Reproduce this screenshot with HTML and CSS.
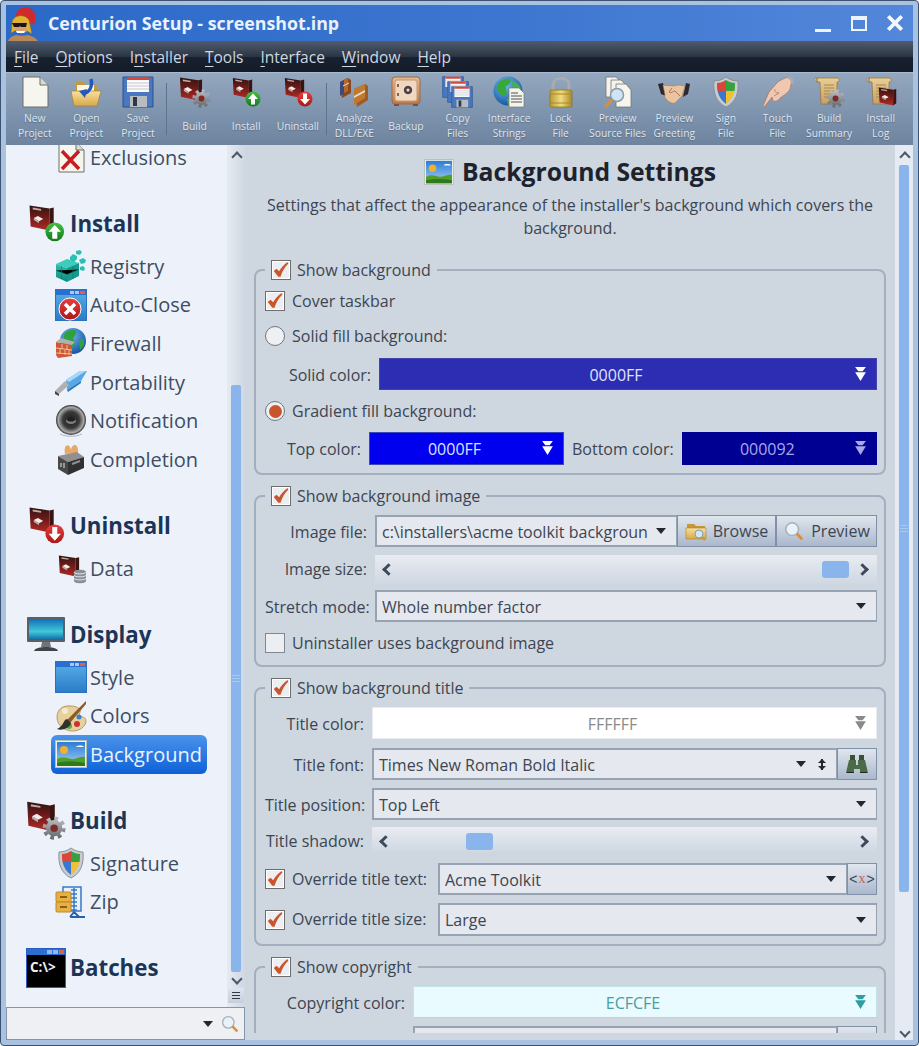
FILE: index.html
```html
<!DOCTYPE html>
<html lang="en">
<head>
<meta charset="utf-8">
<title>Centurion Setup - screenshot.inp</title>
<link rel="stylesheet" href="styles.css">
</head>
<body>
<svg class="sprite" aria-hidden="true">
<defs>
<linearGradient id="gBox" x1="0" y1="0" x2="0" y2="1"><stop offset="0" stop-color="#2a1614"/><stop offset=".45" stop-color="#6e1a18"/><stop offset="1" stop-color="#b02a26"/></linearGradient>
<linearGradient id="gGear" x1="0" y1="0" x2="0" y2="1"><stop offset="0" stop-color="#b5b8bc"/><stop offset="1" stop-color="#6c7074"/></linearGradient>
<linearGradient id="gGreen" x1="0" y1="0" x2="0" y2="1"><stop offset="0" stop-color="#48c040"/><stop offset="1" stop-color="#107a20"/></linearGradient>
<linearGradient id="gRed" x1="0" y1="0" x2="0" y2="1"><stop offset="0" stop-color="#e84040"/><stop offset="1" stop-color="#a81818"/></linearGradient>
<linearGradient id="gFolder" x1="0" y1="0" x2="0" y2="1"><stop offset="0" stop-color="#f8e0a0"/><stop offset="1" stop-color="#d8a848"/></linearGradient>
<linearGradient id="gGold" x1="0" y1="0" x2="1" y2="0"><stop offset="0" stop-color="#b89a38"/><stop offset=".5" stop-color="#f0dc80"/><stop offset="1" stop-color="#a88a28"/></linearGradient>
<linearGradient id="gWin" x1="0" y1="0" x2="0" y2="1"><stop offset="0" stop-color="#5ab0e8"/><stop offset="1" stop-color="#2a7cc8"/></linearGradient>
<linearGradient id="gScreen" x1="0" y1="0" x2="0" y2="1"><stop offset="0" stop-color="#1070b8"/><stop offset=".6" stop-color="#40c8d8"/><stop offset="1" stop-color="#0c68a8"/></linearGradient>
<linearGradient id="gSky" x1="0" y1="0" x2="0" y2="1"><stop offset="0" stop-color="#2a7cd8"/><stop offset="1" stop-color="#a8d0f0"/></linearGradient>
<linearGradient id="gCopper" x1="0" y1="0" x2="0" y2="1"><stop offset="0" stop-color="#e8b890"/><stop offset="1" stop-color="#b87a50"/></linearGradient>
<linearGradient id="gScroll" x1="0" y1="0" x2="0" y2="1"><stop offset="0" stop-color="#e8cf98"/><stop offset="1" stop-color="#c8a060"/></linearGradient>
<linearGradient id="gTeal" x1="0" y1="0" x2="0" y2="1"><stop offset="0" stop-color="#30c0b0"/><stop offset="1" stop-color="#10887c"/></linearGradient>
<radialGradient id="gGlobe" cx=".4" cy=".3" r=".8"><stop offset="0" stop-color="#70b8f0"/><stop offset="1" stop-color="#0c4a98"/></radialGradient>
<radialGradient id="gSpk" cx=".5" cy=".5" r=".5"><stop offset="0" stop-color="#1c1c1c"/><stop offset=".55" stop-color="#3a3a3a"/><stop offset=".85" stop-color="#a8a8a8"/><stop offset="1" stop-color="#303030"/></radialGradient>

<symbol id="box" viewBox="0 0 25 26"><path d="M1 1 20 4V25L2 21Z" fill="url(#gBox)"/><path d="M20 4l4-1V22l-4 3Z" fill="#3a1412"/><path d="M4 3l8 1.500V6L4 4.800Z" fill="#c8a8a0"/><path d="M5 13l4-2 5 3-4 2Z" fill="#f0ece8"/><path d="M5 13l5 3v2l-5-3Z" fill="#b8b0ac"/></symbol>
<symbol id="gear" viewBox="0 0 32 32"><circle cx="16" cy="16" r="12" fill="none" stroke="url(#gGear)" stroke-width="7" stroke-dasharray="4.700 4.700"/><circle cx="16" cy="16" r="11" fill="url(#gGear)"/><circle cx="16" cy="16" r="5" fill="#7e2a28"/></symbol>
<symbol id="up" viewBox="0 0 32 32"><circle cx="16" cy="16" r="15" fill="url(#gGreen)"/><path d="M16 5 26 16H20V27H12V16H6Z" fill="#fff"/></symbol>
<symbol id="down" viewBox="0 0 32 32"><circle cx="16" cy="16" r="15" fill="url(#gRed)"/><path d="M16 27 26 16H20V5H12V16H6Z" fill="#fff"/></symbol>
<symbol id="box-gear" viewBox="0 0 32 32"><use href="#box" x="0" y="0" width="24" height="26"/><use href="#gear" x="13" y="13" width="19" height="19"/></symbol>
<symbol id="box-up" viewBox="0 0 32 32"><use href="#box" x="2" y="0" width="21" height="24"/><use href="#up" x="15" y="15" width="16" height="16"/></symbol>
<symbol id="box-down" viewBox="0 0 32 32"><use href="#box" x="2" y="0" width="21" height="24"/><use href="#down" x="15" y="15" width="16" height="16"/></symbol>
<symbol id="box-db" viewBox="0 0 32 32"><use href="#box" x="3" y="1" width="22" height="26"/><path d="M19 20c0-3 12-3 12 0V29c0 3-12 3-12 0Z" fill="#8a9094"/><path d="M19 20c0 2.500 12 2.500 12 0M19 23c0 2.500 12 2.500 12 0M19 26c0 2.500 12 2.500 12 0" fill="none" stroke="#e0e4e8"/></symbol>
<symbol id="doc" viewBox="0 0 32 32"><path d="M4 1H21L29 9V31H4Z" fill="#f6f5ee" stroke="#6e6e68"/><path d="M21 1V9H29" fill="#dcdcd0" stroke="#6e6e68"/></symbol>
<symbol id="excl" viewBox="0 0 32 32"><use href="#doc"/><path d="M7 10 24 28M24 10 7 28" stroke="#c81c20" stroke-width="3.500"/></symbol>
<symbol id="folder" viewBox="0 0 32 32"><path d="M5 6h8l3 3h11v8H5Z" fill="#c89838"/><path d="M7 9H24V22H7Z" fill="#fdf6e0"/><path d="M1 15H31L27 30H4Z" fill="url(#gFolder)" stroke="#a88030" stroke-width=".7"/><path d="M21 3c2 8-2 13-7 15" fill="none" stroke="#2558b8" stroke-width="3.500"/><path d="M9 15l8-2-2 9Z" fill="#2558b8"/></symbol>
<symbol id="floppy" viewBox="0 0 32 32"><path d="M1 1H31V31H1Z" fill="#4a78c0" stroke="#2c5090"/><path d="M5 1H27V16H5Z" fill="#fafafa"/><path d="M5 1H27V4H5Z" fill="#d84838"/><path d="M5 7H27M5 10H27M5 13H27" stroke="#c8c8d0"/><path d="M8 20H25V31H8Z" fill="#b8bcc0"/><path d="M11 21H15V30H11Z" fill="#303848"/></symbol>
<symbol id="copy" viewBox="0 0 32 32"><use href="#floppy" x="0" y="0" width="22" height="22"/><use href="#floppy" x="5" y="5" width="22" height="22"/><use href="#floppy" x="9" y="10" width="22" height="22"/></symbol>
<symbol id="dll" viewBox="0 0 32 32"><path d="M2 6l8-4 3 2V17l-9 5Z" fill="#8a4a20"/><path d="M2 6 10 2V15l-8 5Z" fill="#3a4a80"/><path d="M6 4l4-2V15l-4 2Z" fill="#b86828"/><path d="M16 13l11-5 3 2V24l-11 7Z" fill="#a05a24"/><path d="M16 13 27 8V22L16 29Z" fill="#c07a30"/><path d="M16 20l11-6v2l-11 6Z" fill="#e8e0d0"/><path d="M5 10l6-3" stroke="#e8e0d0"/></symbol>
<symbol id="safe" viewBox="0 0 32 32"><rect x="2" y="1" width="28" height="27" rx="3" fill="url(#gCopper)" stroke="#a06a40"/><rect x="5" y="4" width="22" height="21" rx="2" fill="#f0d8c0" stroke="#c89870"/><circle cx="18" cy="14" r="5" fill="#5a4038" stroke="#e8e0d8" stroke-width="1.500"/><circle cx="18" cy="14" r="1.500" fill="#e8e0d8"/><path d="M8 8v3M8 17v3" stroke="#906040" stroke-width="2"/><path d="M4 28h5v2H4ZM23 28h5v2h-5Z" fill="#805030"/></symbol>
<symbol id="globe-doc" viewBox="0 0 32 32"><circle cx="15" cy="15" r="14.500" fill="url(#gGlobe)"/><path d="M4 9c4-6 9-7 13-6 2 3-1 6-4 7-1 4 2 5 0 9-3 3-6 0-7-3-2-2-3-4-2-7Z" fill="#38a838"/><path d="M20 5c3 1 7 4 8 8l-5 1c-3-2-5-5-3-9ZM14 23l5-2v7l-4 1Z" fill="#48b048"/><path d="M16 12H26L31 17V31H16Z" fill="#f4f4ee" stroke="#787870" stroke-width=".7"/><path d="M18 17h7M18 20h11M18 23h11M18 26h11" stroke="#505050"/></symbol>
<symbol id="lock" viewBox="0 0 32 32"><path d="M8 15V9c0-9 16-9 16 0v6" fill="none" stroke="#a8acb0" stroke-width="3"/><rect x="5" y="14" width="22" height="17" rx="1.500" fill="url(#gGold)" stroke="#8a7020" stroke-width=".7"/><path d="M5 18H27M5 27H27" stroke="#a88a28"/></symbol>
<symbol id="preview" viewBox="0 0 32 32"><path d="M4 1H14L18 5V21H4Z" fill="#f4f4ec" stroke="#76766e" stroke-width=".8"/><path d="M9 4H19L23 8V25H9Z" fill="#f4f4ec" stroke="#76766e" stroke-width=".8"/><path d="M14 8H24L29 14V31H14Z" fill="#f6f6ee" stroke="#76766e" stroke-width=".8"/><circle cx="15" cy="19" r="6.500" fill="#cfe4f4" stroke="#8a9aa8" stroke-width="1.500"/><path d="M10 24 3 31" stroke="#d89038" stroke-width="3"/></symbol>
<symbol id="hands" viewBox="0 0 32 32"><path d="M0 8 5 7 8 20 3 18ZM32 8l-4-1-3 14 5-3Z" fill="#2a2a2e"/><path d="M5 9c4 1 7 0 10 1l6-1 6 1-3 10-7 7c-3 1-6-1-8-3-2-2-3-4-2-5Z" fill="#eac4a0" stroke="#a87850" stroke-width=".6"/><path d="M14 12l-3 4c2 2 4-1 6-1l5 5" fill="none" stroke="#a87850"/></symbol>
<symbol id="shield" viewBox="0 0 32 32"><path d="M16 1C12 4 8 5 4 5c-1 12 2 21 12 26C26 26 29 17 28 5c-4 0-8-1-12-4Z" fill="#c8ccd0" stroke="#8a9098"/><path d="M16 4C13 6 10 7 7 7c0 3 0 6 .5 8H16Z" fill="#d84838"/><path d="M16 4c3 2 6 3 9 3 0 3 0 6-.5 8H16Z" fill="#38a040"/><path d="M7.500 15H16V28c-4-3-7-7-8.500-13Z" fill="#3878d0"/><path d="M24.500 15H16V28c4-3 7-7 8.500-13Z" fill="#f0c030"/></symbol>
<symbol id="hand" viewBox="0 0 32 32"><path d="M30 4 26 1c-5 2-10 4-12 7L7 16 1 30c0 1 1 1 2 0l7-9 1 4c3 1 6-1 7-3 3-2 6-4 9-7 2-3 2-8 3-11Z" fill="#f0c8b0" stroke="#a87868" stroke-width=".8"/><path d="M26 1c3 1 5 3 4 7" fill="none" stroke="#a8acb0" stroke-width="3"/><path d="M13 13c-1 3 2 5 4 3M12 20l5-3" fill="none" stroke="#b88878"/></symbol>
<symbol id="scroll" viewBox="0 0 32 32"><path d="M4 2c-3-1-3 4 0 4V2h20c3 0 3 4 0 4v22H8l-1-22H4Z" fill="url(#gScroll)" stroke="#907040" stroke-width=".7"/><path d="M11 9h10M11 12h10M11 15h10M11 18h8M11 21h6" stroke="#a88850"/></symbol>
<symbol id="scroll-gear" viewBox="0 0 32 32"><use href="#scroll" x="0" y="0" width="32" height="32"/><use href="#gear" x="13" y="13" width="19" height="19"/></symbol>
<symbol id="scroll-box" viewBox="0 0 32 32"><use href="#scroll" x="0" y="0" width="32" height="32"/><use href="#box" x="13" y="10" width="19" height="21"/></symbol>
<symbol id="registry" viewBox="0 0 32 32"><path d="M1 14 12 9l12 4-12 5Z" fill="#3cccbc"/><path d="M1 14l11 4v14L1 27Z" fill="url(#gTeal)"/><path d="M12 18 24 13V26L12 32Z" fill="#149a8e"/><path d="M6.500 16v13M18 16v13M1 20.500l11 4 12-5" stroke="#0e7a72" stroke-width=".6"/><path d="M15 7l3-3 4 2v3l-3 3-4-2ZM21 1l4-1 2 2-2 3-4-1ZM24 10l4-2 3 2-1 3-4 1ZM25 17l3-1 2 2-1 3-4-1Z" fill="#2ac0b6"/></symbol>
<symbol id="window" viewBox="0 0 32 32"><rect x=".5" y=".5" width="31" height="31" fill="url(#gWin)" stroke="#2c70c0"/><path d="M1 1H31V6H1Z" fill="#2a6ed0"/><path d="M15 2h4v3h-4ZM20 2h4v3h-4Z" fill="#a8c8f0"/><path d="M25 2h5v3h-5Z" fill="#e06048"/></symbol>
<symbol id="autoclose" viewBox="0 0 32 32"><use href="#window"/><circle cx="15" cy="20" r="11" fill="url(#gRed)" stroke="#fff" stroke-width="1"/><path d="M10 15 20 25M20 15 10 25" stroke="#fff" stroke-width="3.500"/></symbol>
<symbol id="firewall" viewBox="0 0 32 32"><circle cx="18" cy="14" r="13" fill="url(#gGlobe)"/><path d="M10 6c4-4 9-4 11-2 1 3-2 5-3 8 3 3 2 6 0 9-3 0-3-4-6-5-3-2-4-6-2-10ZM24 13l5-1v6l-4 5Z" fill="#30a040"/><path d="M1 15 17 18V29L3 31 1 28Z" fill="#d05830"/><path d="M1 15 6 11 20 15 17 18Z" fill="#b0b0b0"/><path d="M1 21 17 23M1 26 17 27M7 17V22M12 18V23M5 22V27M10 23V28M14 23V28" stroke="#f0d8c0" stroke-width=".8"/></symbol>
<symbol id="usb" viewBox="0 0 32 32"><path d="M11 14 25 5H32L26 15 12 24Z" fill="#58a8e8"/><path d="M11 14 25 5H31L14 16Z" fill="#a8d8f8"/><path d="M12 24 26 15V17L13 26Z" fill="#2878c0"/><path d="M0 25 10 15 14 19 4 28Z" fill="#b0b0b0"/><path d="M0 25 4 28V30L0 28Z" fill="#404040"/></symbol>
<symbol id="speaker" viewBox="0 0 32 32"><circle cx="16" cy="15" r="15" fill="url(#gSpk)"/><ellipse cx="16" cy="16" rx="5" ry="3" fill="#808080"/><ellipse cx="16" cy="14.500" rx="4" ry="2" fill="#202020"/><path d="M5 29c6 3 16 3 22 0" stroke="#b0b4b8" fill="none"/></symbol>
<symbol id="toaster" viewBox="0 0 32 32"><path d="M10 11c-2-11 5-11 6-4 1-7 8-7 7 3Z" fill="#e8a868"/><path d="M3 13 22 9 29 14 13 19Z" fill="#909090"/><path d="M3 13 13 19V32L3 26Z" fill="#484848"/><path d="M13 19 29 14V25L13 32Z" fill="#303030"/><path d="M6 20v4M9 20v5" stroke="#b0b0b0" stroke-width="1.500"/><path d="M17 21l8-3" stroke="#909090" stroke-width="2"/></symbol>
<symbol id="monitor" viewBox="0 0 40 36"><rect x="1" y="1" width="38" height="25" rx="1" fill="#5a6068"/><rect x="3" y="3" width="34" height="21" fill="url(#gScreen)"/><path d="M16 26H24L25 31H15Z" fill="#707478"/><path d="M8 35c1-3 6-4 12-4s11 1 12 4Z" fill="#404448"/></symbol>
<symbol id="palette" viewBox="0 0 32 32"><path d="M16 6C7 5 2 10 2 17c0 9 8 14 16 14 7 0 13-5 13-10 0-4-4-4-6-5-2-2 1-3 0-6-2-3-5-4-9-4Z" fill="#e8d09c" stroke="#a88850" stroke-width=".8"/><circle cx="10" cy="11" r="3" fill="#f4ead0"/><circle cx="24" cy="17" r="2.500" fill="#3880c8"/><circle cx="22" cy="24" r="3" fill="#d03030"/><circle cx="14" cy="26" r="3" fill="#50b040"/><path d="M31 1 12 20l3 3L31 4Z" fill="#8a5a28"/><path d="M12 19c-4 1-3 7-10 10 5 2 13-1 14-6Z" fill="#303030"/></symbol>
<symbol id="landscape" viewBox="0 0 32 28"><rect x=".5" y=".5" width="31" height="27" fill="#eef0e8" stroke="#b8c0b0"/><rect x="2" y="2" width="28" height="24" fill="url(#gSky)"/><circle cx="9" cy="10" r="4" fill="#f0b030"/><path d="M21 7c1-2 7-2 8 0Z" fill="#fff"/><path d="M2 19c6-3 10-1 14 0s9-3 14-2v9H2Z" fill="#50a028"/><path d="M2 23c8-2 18-2 28 0v3H2Z" fill="#2e7820"/></symbol>
<symbol id="zip" viewBox="0 0 32 32"><path d="M8 1H26V25H8Z" fill="#e8f0f8" stroke="#3878c8" stroke-width="1.500"/><path d="M19 2v24M16 4h6M16 8h6M16 12h6M16 16h6M16 20h6M16 24h6" stroke="#3878c8" stroke-width="1.500"/><rect x="1" y="6" width="15" height="10" rx="1" fill="#e8b040" stroke="#c08828"/><rect x="1" y="16" width="15" height="10" rx="1" fill="#e8b040" stroke="#c08828"/><path d="M5 11h7M5 21h7" stroke="#8a6018" stroke-width="2"/><path d="M19 26l-4 5M19 26l5 5M15 31h15" stroke="#2860b0" stroke-width="2"/></symbol>
<symbol id="cmd" viewBox="0 0 40 40"><rect x=".5" y=".5" width="39" height="39" fill="#000" stroke="#2c5cc0"/><path d="M1 1H39V7H1Z" fill="#2a6ed0"/><path d="M21 2h5v4h-5ZM27 2h5v4h-5Z" fill="#90b8f0"/><path d="M33 2h5v4h-5Z" fill="#e06048"/><text x="4" y="24" class="cmd-text">C:\&gt;</text></symbol>
<symbol id="spartan" viewBox="0 0 32 36"><path d="M8 10C9 2 22-2 27 9c1 4 0 7-1 11l-4-2C21 13 16 10 8 12Z" fill="#cf2a2c"/><path d="M4 18c0-8 13-10 17-3l3 14-5-3-10-1-6 3Z" fill="#e2b42e" stroke="#8a6818" stroke-width=".6"/><path d="M5 18l13-1 1 9c-3 3-9 3-11 0Z" fill="#d8a070"/><path d="M4 18h15l-1 4h-5l-1-1-1 1H6Z" fill="#181818"/><path d="M8 26h9l-1 2H9Z" fill="#fff"/><path d="M0 36c2-4 5-5 8-6 4 1 8 1 12 0 4 1 8 3 10 6Z" fill="#b88858"/></symbol>
<symbol id="binoc" viewBox="0 0 22 20"><path d="M4 1h5v5H4ZM13 1h5v5h-5Z" fill="#3a5038"/><path d="M3 6h7v5h2V6h7l3 13h-8v-4H8v4H0Z" fill="#4a6a48"/><path d="M1 18h7v1H1ZM14 18h7v1h-7Z" fill="#202820"/></symbol>
<symbol id="browse" viewBox="0 0 22 20"><path d="M2 3h7l2 2h9v3H2Z" fill="#c89838"/><path d="M1 7H21V18H1Z" fill="url(#gFolder)" stroke="#a88030" stroke-width=".6"/><circle cx="14" cy="13" r="4" fill="#cfe8f4" stroke="#8a9aa8"/><path d="M17 16l3 3" stroke="#d89038" stroke-width="2"/></symbol>
<symbol id="glass" viewBox="0 0 22 22"><circle cx="9" cy="9" r="7" fill="#e8f2f8" stroke="#a8b0b8" stroke-width="1.600"/><path d="M14 14 20 20" stroke="#d89038" stroke-width="3"/></symbol>
<symbol id="dbl" viewBox="0 0 10 14"><path d="M0 0H10L7 4H3ZM0 5H10L5 13Z"/></symbol>
<symbol id="check" viewBox="0 0 20 20"><path d="M2 11l3-2.500 3 3c2-4 5-7 9-10 1 0 1 1 1 1.500-4 4-7 9-8.500 14.500H7Z"/></symbol>
</defs>
</svg>

<div class="window">
  <header class="titlebar">
    <svg class="spartan"><use href="#spartan"/></svg>
    <h1 class="title">Centurion Setup - screenshot.inp</h1>
    <div class="winbtns">
      <span class="wb wb-min"></span>
      <span class="wb wb-max"></span>
      <svg class="wb-close" viewBox="0 0 16 16"><path d="M2 2 14 14M14 2 2 14"/></svg>
    </div>
  </header>

  <nav class="menubar">
    <span class="menu"><u>F</u>ile</span>
    <span class="menu"><u>O</u>ptions</span>
    <span class="menu">I<u>n</u>staller</span>
    <span class="menu"><u>T</u>ools</span>
    <span class="menu"><u>I</u>nterface</span>
    <span class="menu"><u>W</u>indow</span>
    <span class="menu"><u>H</u>elp</span>
  </nav>

  <div class="toolbar">
    <div class="tool"><svg class="ticon"><use href="#doc"/></svg><span>New<br>Project</span></div>
    <div class="tool"><svg class="ticon"><use href="#folder"/></svg><span>Open<br>Project</span></div>
    <div class="tool"><svg class="ticon"><use href="#floppy"/></svg><span>Save<br>Project</span></div>
    <div class="tsep"></div>
    <div class="tool"><svg class="ticon"><use href="#box-gear"/></svg><span>Build</span></div>
    <div class="tool"><svg class="ticon"><use href="#box-up"/></svg><span>Install</span></div>
    <div class="tool"><svg class="ticon"><use href="#box-down"/></svg><span>Uninstall</span></div>
    <div class="tsep"></div>
    <div class="tool"><svg class="ticon"><use href="#dll"/></svg><span>Analyze<br>DLL/EXE</span></div>
    <div class="tool"><svg class="ticon"><use href="#safe"/></svg><span>Backup</span></div>
    <div class="tool"><svg class="ticon"><use href="#copy"/></svg><span>Copy<br>Files</span></div>
    <div class="tool"><svg class="ticon"><use href="#globe-doc"/></svg><span>Interface<br>Strings</span></div>
    <div class="tool"><svg class="ticon"><use href="#lock"/></svg><span>Lock<br>File</span></div>
    <div class="tool tool-wide"><svg class="ticon"><use href="#preview"/></svg><span>Preview<br>Source Files</span></div>
    <div class="tool"><svg class="ticon"><use href="#hands"/></svg><span>Preview<br>Greeting</span></div>
    <div class="tool"><svg class="ticon"><use href="#shield"/></svg><span>Sign<br>File</span></div>
    <div class="tool"><svg class="ticon"><use href="#hand"/></svg><span>Touch<br>File</span></div>
    <div class="tool"><svg class="ticon"><use href="#scroll-gear"/></svg><span>Build<br>Summary</span></div>
    <div class="tool"><svg class="ticon"><use href="#scroll-box"/></svg><span>Install<br>Log</span></div>
  </div>

  <div class="body">
    <aside class="side">
      <div class="nav">
        <div class="navlist">
          <div class="navitem navitem-first"><svg class="nicon"><use href="#excl"/></svg>Exclusions</div>

          <div class="navhead"><svg class="hicon"><use href="#box-up"/></svg>Install</div>
          <div class="navitem"><svg class="nicon"><use href="#registry"/></svg>Registry</div>
          <div class="navitem"><svg class="nicon"><use href="#autoclose"/></svg>Auto-Close</div>
          <div class="navitem"><svg class="nicon"><use href="#firewall"/></svg>Firewall</div>
          <div class="navitem"><svg class="nicon"><use href="#usb"/></svg>Portability</div>
          <div class="navitem"><svg class="nicon"><use href="#speaker"/></svg>Notification</div>
          <div class="navitem"><svg class="nicon"><use href="#toaster"/></svg>Completion</div>

          <div class="navhead"><svg class="hicon"><use href="#box-down"/></svg>Uninstall</div>
          <div class="navitem"><svg class="nicon"><use href="#box-db"/></svg>Data</div>

          <div class="navhead"><svg class="hicon"><use href="#monitor"/></svg>Display</div>
          <div class="navitem"><svg class="nicon"><use href="#window"/></svg>Style</div>
          <div class="navitem"><svg class="nicon"><use href="#palette"/></svg>Colors</div>
          <div class="navitem navitem-on"><svg class="nicon"><use href="#landscape"/></svg>Background</div>

          <div class="navhead"><svg class="hicon"><use href="#box-gear"/></svg>Build</div>
          <div class="navitem"><svg class="nicon"><use href="#shield"/></svg>Signature</div>
          <div class="navitem"><svg class="nicon"><use href="#zip"/></svg>Zip</div>

          <div class="navhead"><svg class="hicon"><use href="#cmd"/></svg>Batches</div>
        </div>
        <div class="vbar vbar-side">
          <div class="chev chev-up"></div>
          <div class="thumb"><i></i><i></i><i></i></div>
          <div class="chev chev-down"></div>
          <div class="gripbox"><i></i><i></i><i></i></div>
        </div>
      </div>
      <div class="search">
        <span class="tri"></span>
        <svg class="search-glass"><use href="#glass"/></svg>
      </div>
    </aside>

    <main class="pane">
      <div class="content">
        <h2 class="heading"><svg class="heading-icon"><use href="#landscape"/></svg>Background Settings</h2>
        <p class="desc">Settings that affect the appearance of the installer's background which covers the background.</p>

        <fieldset class="group group-first">
          <legend class="legend"><span class="cb"><svg><use href="#check"/></svg></span>Show background</legend>
          <div class="row row-check row-first"><span class="cb"><svg><use href="#check"/></svg></span>Cover taskbar</div>
          <div class="row row-check"><span class="radio"></span>Solid fill background:</div>
          <div class="row">
            <span class="lbl lbl-solid">Solid color:</span>
            <div class="color color-solid grow">0000FF<svg class="dbl"><use href="#dbl"/></svg></div>
          </div>
          <div class="row row-check row-tight"><span class="radio radio-on"></span>Gradient fill background:</div>
          <div class="row row-tight row-h33">
            <span class="lbl lbl-top">Top color:</span>
            <div class="color color-top">0000FF<svg class="dbl"><use href="#dbl"/></svg></div>
            <span class="lbl lbl-bottom">Bottom color:</span>
            <div class="color color-bottom grow">000092<svg class="dbl"><use href="#dbl"/></svg></div>
          </div>
        </fieldset>

        <fieldset class="group">
          <legend class="legend"><span class="cb"><svg><use href="#check"/></svg></span>Show background image</legend>
          <div class="row row-first">
            <span class="lbl lbl-img">Image file:</span>
            <div class="combo grow"><span class="combo-text">c:\installers\acme toolkit backgroun</span><span class="tri"></span></div>
            <button class="btn btn-browse"><svg class="btn-icon"><use href="#browse"/></svg>Browse</button>
            <button class="btn btn-preview"><svg class="btn-icon"><use href="#glass"/></svg>Preview</button>
          </div>
          <div class="row row-tight row-imgsize">
            <span class="lbl lbl-img">Image size:</span>
            <div class="slider slider-img"><span class="arrow arrow-l"></span><span class="knob"></span><span class="arrow arrow-r"></span></div>
          </div>
          <div class="row row-close">
            <span class="lbl lbl-img">Stretch mode:</span>
            <div class="combo grow"><span class="combo-text">Whole number factor</span><span class="tri"></span></div>
          </div>
          <div class="row row-check row-tight row-last"><span class="cb cb-off"></span>Uninstaller uses background image</div>
        </fieldset>

        <fieldset class="group">
          <legend class="legend"><span class="cb"><svg><use href="#check"/></svg></span>Show background title</legend>
          <div class="row row-first">
            <span class="lbl lbl-title">Title color:</span>
            <div class="color color-white grow">FFFFFF<svg class="dbl"><use href="#dbl"/></svg></div>
          </div>
          <div class="row row-wide">
            <span class="lbl lbl-title">Title font:</span>
            <div class="combo grow"><span class="combo-text">Times New Roman Bold Italic</span><span class="tri"></span><span class="updown"></span></div>
            <button class="btn btn-square btn-binoc"><svg class="btn-binoc-icon"><use href="#binoc"/></svg></button>
          </div>
          <div class="row row-tight">
            <span class="lbl lbl-title">Title position:</span>
            <div class="combo grow"><span class="combo-text">Top Left</span><span class="tri"></span></div>
          </div>
          <div class="row row-slider">
            <span class="lbl lbl-title">Title shadow:</span>
            <div class="slider slider-title"><span class="arrow arrow-l"></span><span class="knob"></span><span class="arrow arrow-r"></span></div>
          </div>
          <div class="row row-tight">
            <span class="cb"><svg><use href="#check"/></svg></span><span class="ovr">Override title text:</span>
            <div class="combo grow"><span class="combo-text">Acme Toolkit</span><span class="tri"></span></div>
            <button class="btn btn-x">&lt;<b>x</b>&gt;</button>
          </div>
          <div class="row row-tight row-end">
            <span class="cb"><svg><use href="#check"/></svg></span><span class="ovr">Override title size:</span>
            <div class="combo grow"><span class="combo-text">Large</span><span class="tri"></span></div>
          </div>
        </fieldset>

        <fieldset class="group">
          <legend class="legend"><span class="cb"><svg><use href="#check"/></svg></span>Show copyright</legend>
          <div class="row row-first">
            <span class="lbl lbl-copy">Copyright color:</span>
            <div class="color color-copy grow">ECFCFE<svg class="dbl"><use href="#dbl"/></svg></div>
          </div>
          <div class="row row-tight">
            <span class="lbl lbl-copy"></span>
            <div class="combo grow"></div>
            <button class="btn btn-square"></button>
          </div>
        </fieldset>
      </div>
      <div class="vbar vbar-main">
        <div class="chev chev-up"></div>
        <div class="thumb"><i></i><i></i><i></i></div>
        <div class="chev chev-down"></div>
      </div>
    </main>
  </div>
</div>
</body>
</html>
```
FILE: styles.css
```css
* { box-sizing: border-box; }
html, body { margin: 0; height: 1046px; overflow: hidden; }
body { font-family: "Open Sans", "Noto Sans", sans-serif; color: #3c4551; }
.sprite { display: block; width: 0; height: 0; }
.cmd-text { font-family: "Open Sans", sans-serif; font-size: 13.5px; fill: #f0f0f0; }

.window {
  height: 1046px; display: flex; flex-direction: column;
  border: 1px solid #3c5272; border-radius: 4px; padding: 4px 5px 5px;
  background: #a9c2df;
}

.titlebar {
  height: 36px; flex: none; display: flex; align-items: center;
  background: linear-gradient(90deg, #2b69c8, #3d76d0 55%, #5387da);
}
.spartan { width: 32px; height: 36px; margin-left: 2px; flex: none; }
.title { margin: 0 0 0 8px; font-size: 17.8px; font-weight: 700; color: #e9f1fb; white-space: nowrap; flex: 1; }
.winbtns { display: flex; align-items: center; }
.wb { display: block; }
.wb-min { width: 16px; height: 3px; background: #eef4fc; margin: 14px 20px 0 0; }
.wb-max { width: 16px; height: 15px; border: 2px solid #eef4fc; border-top-width: 4px; margin-right: 19px; }
.wb-close { width: 18px; height: 18px; margin-right: 9px; stroke: #f4f8fd; stroke-width: 3.4; }

.menubar {
  height: 31px; flex: none; display: flex; align-items: center; gap: 17px; padding: 0 0 0 8px;
  background: linear-gradient(#505c6e, #2b3544 50%, #182130 51%, #141c28);
}
.menu { color: #cfd7e2; font-size: 15.5px; }
.menu u { text-underline-offset: 3px; text-decoration-thickness: 1px; }

.toolbar {
  height: 73px; flex: none; display: flex; padding: 0 0 0 3px;
  background: linear-gradient(#93a7bf, #6e839e);
  border-top: 1px solid #a9bbd0;
}
.tool {
  width: 51.6px; flex: none; display: flex; flex-direction: column; align-items: center;
  padding-top: 3px; color: #dfe6ef; font-size: 10.3px; line-height: 15px; text-align: center;
  text-shadow: 0 1px 1px #5a6c85; white-space: nowrap;
}
.tool span { flex: 1; display: flex; align-items: center; padding-bottom: 1px; }
.tool-wide { width: 62px; }
.ticon { width: 32px; height: 32px; flex: none; }
.tsep { width: 1px; margin: 10px 2px 10px 2px; background: #5f7390; flex: none; }

.body { flex: 1; min-height: 0; display: flex; }

.side { width: 239px; flex: none; display: flex; flex-direction: column; }
.nav { flex: 1; min-height: 0; display: flex; background: #edf2fa; }
.navlist { flex: 1; overflow: hidden; padding-left: 20px; display: flex; flex-direction: column; }
.navitem {
  height: 38.67px; flex: none; display: flex; align-items: center; gap: 3px;
  margin-left: 25px; padding-left: 4px; font-size: 20px; color: #3e4d62; border-radius: 6px; width: 156px;
}
.navitem-first { margin-top: -7px; }
.navitem-on { background: linear-gradient(#4b93ea, #0e60d6); color: #e9f4ff; }
.navhead {
  height: 47px; flex: none; display: flex; align-items: center; gap: 4px; margin-top: 23.2px;
  font-size: 22.3px; font-weight: 700; color: #1c3557;
}
.nicon { width: 32px; height: 32px; flex: none; }
.hicon { width: 40px; height: 40px; flex: none; }

.vbar { flex: none; display: flex; flex-direction: column; align-items: center; }
.vbar-side { width: 18px; background: linear-gradient(90deg, #e6ebf3, #cfd7e2); }
.vbar-main { width: 18px; background: #e6ebf3; height: 895px; }
.thumb {
  width: 10px; background: #8ab5ec; border-radius: 2px; display: flex; flex-direction: column;
  align-items: center; justify-content: center; gap: 2px;
}
.thumb i { display: block; width: 8px; height: 1px; background: #a9c8ee; }
.vbar-side .thumb { height: 587px; margin-top: 224px; }
.vbar-main .thumb { height: 727px; margin-top: 4px; }
.chev { width: 12px; height: 14px; flex: none; position: relative; }
.chev::before {
  content: ""; position: absolute; left: 3px; width: 6px; height: 6px;
  border: 2px solid #4a5868; border-width: 2px 0 0 2px; transform: rotate(45deg);
}
.chev-up::before { top: 6px; }
.chev-down::before { top: 2px; transform: rotate(225deg); }
.vbar-side .chev-up { margin-top: 2px; }
.vbar-side .chev-down { margin-top: 1px; }
.vbar-main .chev-up { margin-top: 2px; }
.vbar-main .chev-down { margin-top: 134px; }
.gripbox {
  width: 16px; height: 15px; margin-top: 1px; background: linear-gradient(#dfe5ed, #c5cfdc);
  display: flex; flex-direction: column; align-items: center; justify-content: center; gap: 2px;
}
.gripbox i { display: block; width: 8px; height: 1px; background: #333c48; }

.search {
  height: 33px; flex: none; display: flex; align-items: center; justify-content: flex-end; gap: 8px;
  background: #eef0f4; border: 1px solid #8795a8; padding-right: 5px;
}
.search-glass { width: 18px; height: 18px; }
.tri { width: 0; height: 0; border: 5px solid transparent; border-top: 6px solid #23282e; border-bottom: 0; flex: none; }

.pane { flex: 1; min-width: 0; display: flex; background: #ced6e0; }
.content { flex: 1; min-width: 0; height: 888px; overflow: hidden; padding: 0 9px; }

.heading {
  margin: 0; height: 55px; padding-top: 7px; display: flex; align-items: flex-start; justify-content: center; gap: 8px;
  font-size: 24.7px; line-height: 40px; font-weight: 700; color: #1d232c;
}
.heading-icon { width: 30px; height: 26px; margin-top: 7px; }
.desc { margin: -6px 0 0; font-size: 16px; line-height: 23px; text-align: center; color: #3c4551; }

.group {
  margin: 10px 0 0; padding: 0 7px 8px 9px; border: 2px solid #a3afbe; border-radius: 8px; min-width: 0;
}
.group-first { margin-top: 19px; }
.legend { height: 22px; padding: 0 6px; display: flex; align-items: center; gap: 6px; font-size: 16px; }

.cb {
  width: 20px; height: 20px; flex: none; background: #eceef1; border: 1px solid #6d6d6d; display: block;
  box-shadow: inset 0 0 0 1px #fff;
}
.cb svg { display: block; width: 18px; height: 18px; fill: #c8552b; }
.cb-off { border-color: #7f8792; box-shadow: none; }
.radio {
  width: 20px; height: 20px; flex: none; border-radius: 50%; background: #eef0f3; border: 1px solid #6f7680;
  display: flex; align-items: center; justify-content: center;
}
.radio-on::after { content: ""; width: 13px; height: 13px; border-radius: 50%; background: #c8552b; }

.row { display: flex; align-items: stretch; height: 32px; margin-top: 9px; font-size: 16px; line-height: 32px; white-space: nowrap; }
.row-first { margin-top: 8px; }
.row-check { height: 26px; line-height: 26px; align-items: center; gap: 7px; }
.row-first.row-check { margin-top: 7px; }
.row-tight { margin-top: 8px; }
.row-wide { margin-top: 9px; }
.row-close { margin-top: 3px; }
.row-h33 { height: 33px; line-height: 33px; }
.row-slider { margin-top: 7px; height: 28px; line-height: 28px; }
.row-imgsize { line-height: 28px; }
.row-imgsize .slider { padding-bottom: 4px; }
.row-last { margin-bottom: 1px; }
.row-end { height: 33px; line-height: 33px; }
.row > .cb { align-self: center; }

.lbl { text-align: right; margin-right: 8px; flex: none; padding-top: 1px; }
.row-slider .lbl, .row-imgsize .lbl { padding-top: 0; }
.lbl-solid { width: 106px; }
.lbl-top { width: 96px; }
.lbl-bottom { margin-left: 8px; }
.lbl-img { width: 102px; }
.lbl-title { width: 99px; }
.lbl-copy { width: 140px; }
.ovr { width: 153px; padding-left: 7px; flex: none; }
.grow { flex: 1; min-width: 0; }

.color { position: relative; text-align: center; padding-right: 24px; border: 1px solid; }
.dbl { position: absolute; right: 10px; top: 8px; width: 11px; height: 15px; fill: currentColor; }
.color-solid { background: #2d2db3; border-color: #4343ad; color: #dfe4fb; }
.color-solid .dbl, .color-top .dbl { fill: #fff; }
.color-top { background: #0000ee; border-color: #3a48b8; color: #dbe2ff; width: 195px; flex: none; }
.color-bottom { background: #000092; border-color: #000092; color: #a8a8e8; }
.color-white { background: #fff; border-color: #e8ecf2; color: #8a8a8a; }
.color-copy { background: #e9fbfe; border-color: #c2e4e8; border-bottom-color: #aadadf; color: #4a9ca2; }
.color-copy .dbl { fill: #2f9da1; }

.combo {
  display: flex; align-items: center; padding: 0 10px 0 5px; background: #e5e8ee;
  border: 1px solid #97a2b2; border-width: 2px 1px 2px 2px; color: #3c4551;
}
.combo-text { flex: 1; overflow: hidden; white-space: nowrap; padding-top: 1px; }
.updown {
  width: 8px; height: 11px; margin: 0 0 0 12px; flex: none; position: relative;
  background: linear-gradient(#23282e, #23282e) center / 2px 100% no-repeat;
}
.updown::before, .updown::after { content: ""; position: absolute; left: 0; border: 4px solid transparent; }
.updown::before { top: 0; border-bottom-color: #23282e; border-top: 0; }
.updown::after { bottom: 0; border-top-color: #23282e; border-bottom: 0; }

.btn {
  font: inherit; color: #3c4551; background: linear-gradient(#e0e6ee, #aab8cc); border: 1px solid #7f90a8;
  display: flex; align-items: center; justify-content: center; gap: 6px; padding: 0; flex: none;
}
.btn-browse { width: 99px; }
.btn-preview { width: 101px; }
.btn-icon { width: 22px; height: 20px; }
.btn-square { width: 40px; }
.btn-binoc-icon { width: 22px; height: 20px; }
.btn-x { width: 30px; font-family: "Liberation Sans", sans-serif; font-size: 14px; gap: 1px; }
.btn-x b { color: #c06858; font-family: "Liberation Serif", serif; font-weight: 400; }

.slider {
  flex: 1; min-width: 0; display: flex; align-items: center; padding: 0 7px 0 9px;
  background: linear-gradient(#e9ecf2, #ccd5e0);
}
.arrow { width: 9px; height: 9px; border: 3px solid #3d4a5c; flex: none; transform: rotate(-45deg); border-width: 3px 0 0 3px; }
.arrow-r { transform: rotate(135deg); margin-right: 3px; }
.knob { width: 27px; height: 17px; background: #8ab5ec; border-radius: 3px; flex: none; }
.slider-img .knob { margin-left: auto; margin-right: 9px; }
.slider-title .knob { margin-left: 76px; margin-right: auto; }
```
